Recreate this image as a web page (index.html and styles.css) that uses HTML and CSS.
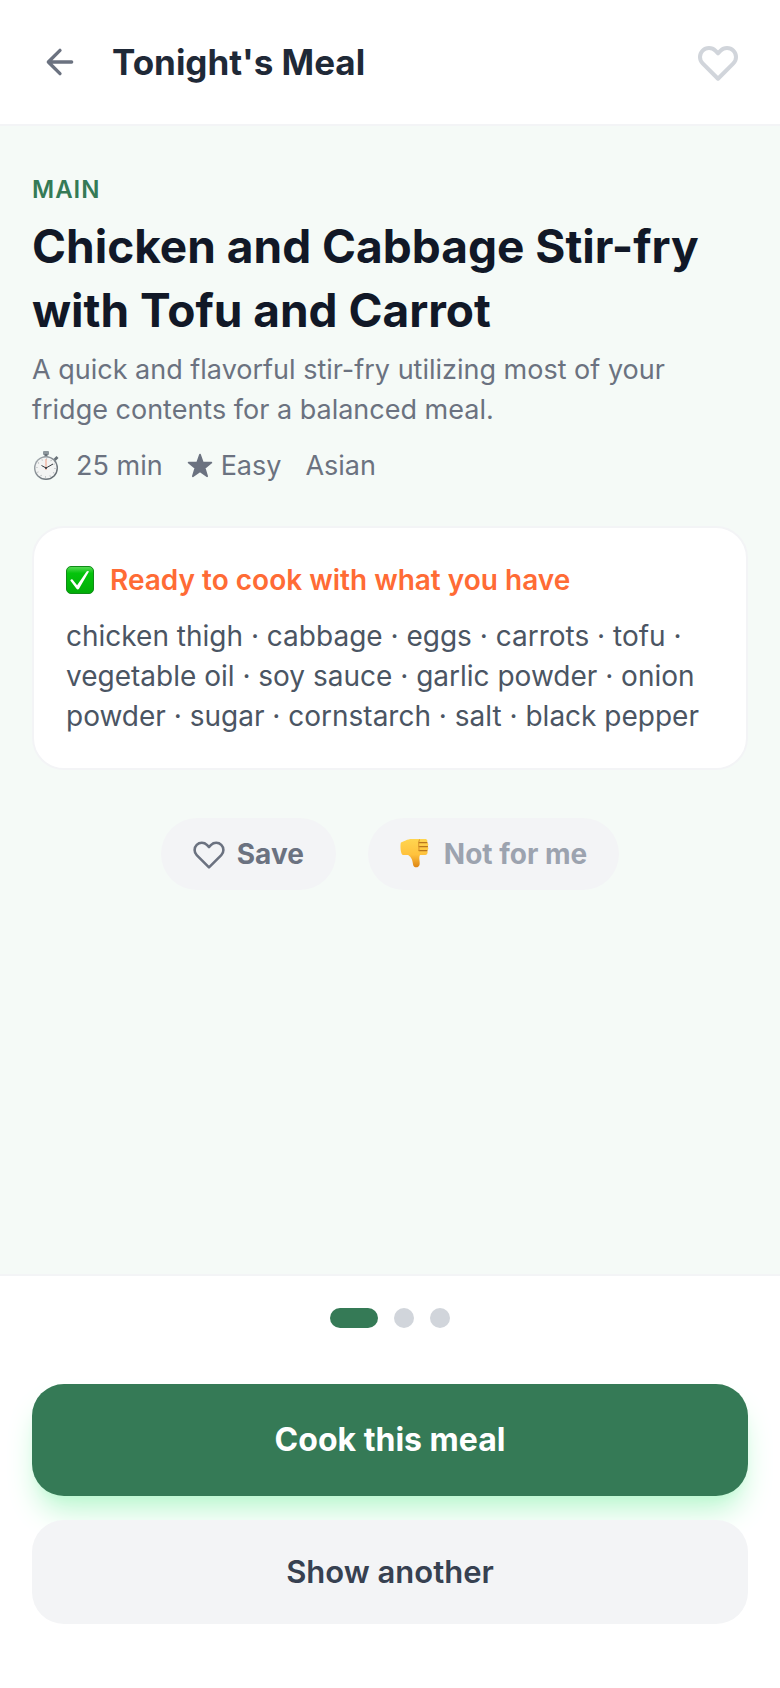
FILE: index.html
```html
<!DOCTYPE html>
<html lang="en">
<head>
    <meta charset="UTF-8">
    <meta name="viewport" content="width=device-width, initial-scale=1.0">
    <title>Tonight's Meal</title>
    <link rel="stylesheet" href="styles.css">
</head>
<body>
    <header class="topbar">
        <button type="button" class="icon-button" aria-label="Back">
            <svg class="icon-back" viewBox="0 0 24 24" fill="none" stroke="currentColor" stroke-width="2" stroke-linecap="round" stroke-linejoin="round">
                <path d="M19 12H5M12 19l-7-7 7-7"/>
            </svg>
        </button>
        <h1>Tonight's Meal</h1>
        <button type="button" class="icon-button favorite" aria-label="Favorite">
            <svg class="icon-heart" viewBox="0 0 24 24" fill="none" stroke="currentColor" stroke-width="2" stroke-linecap="round" stroke-linejoin="round">
                <path d="M4.318 6.318a4.5 4.5 0 000 6.364L12 20.364l7.682-7.682a4.5 4.5 0 00-6.364-6.364L12 7.636l-1.318-1.318a4.5 4.5 0 00-6.364 0z"/>
            </svg>
        </button>
    </header>

    <main class="meal">
        <p class="course">Main</p>
        <h2>Chicken and Cabbage Stir-fry with Tofu and Carrot</h2>
        <p class="description">A quick and flavorful stir-fry utilizing most of your fridge contents for a balanced meal.</p>

        <div class="meta">
            <span class="meta-item time">
                <svg class="icon-timer" viewBox="0 0 28 32">
                    <defs>
                        <linearGradient id="steel" x1="0" y1="0" x2="1" y2="1">
                            <stop offset="0" stop-color="#a9b0b5"/>
                            <stop offset="1" stop-color="#586067"/>
                        </linearGradient>
                    </defs>
                    <rect x="11" y="1" width="6" height="4" rx="1" fill="#8d979c"/>
                    <rect x="12.5" y="4" width="3" height="3" fill="#687178"/>
                    <path d="M21.500 9l3-3 2 2-3 3z" fill="#687178"/>
                    <circle cx="14" cy="18" r="12" fill="url(#steel)"/>
                    <circle cx="14" cy="18" r="10.6" fill="#f3f4f3"/>
                    <circle cx="14" cy="18" r="9" fill="none" stroke="#a4a9ac" stroke-width="1.3" stroke-dasharray=".8 3.912"/>
                    <path d="M14 20V9" stroke="#f1b4a0" stroke-width="1.4"/>
                    <path d="M9.5 15.500L14 18l7-4" fill="none" stroke="#34393d" stroke-width="1"/>
                    <circle cx="14" cy="18" r="1" fill="#34393d"/>
                </svg>
                25 min
            </span>
            <span class="meta-item">
                <svg class="icon-star" viewBox="0 0 24 24" fill="currentColor" stroke="currentColor" stroke-width="1.6" stroke-linejoin="round">
                    <path d="M12 1.500l2.600 7.400h7.900l-6.200 4.900 2.300 7.700-6.600-4.600-6.600 4.600 2.300-7.700-6.200-4.900h7.900z"/>
                </svg>
                Easy
            </span>
            <span class="meta-item">Asian</span>
        </div>

        <section class="ingredients">
            <h3>
                <svg class="icon-check" viewBox="0 0 28 28">
                    <defs>
                        <linearGradient id="green" x1="0" y1="0" x2="0" y2="1">
                            <stop offset="0" stop-color="#5bdc59"/>
                            <stop offset=".25" stop-color="#04c40c"/>
                            <stop offset="1" stop-color="#02ad08"/>
                        </linearGradient>
                    </defs>
                    <rect x=".5" y=".5" width="27" height="27" rx="4.5" fill="url(#green)" stroke="#108c18"/>
                    <path d="M4.300 14.400c.7-1.500 2.300-1.500 3 .1l3.800 4.800L20.600 5.600c.6-.8 2.600-.7 2.100.5L13 22.800c-.5.900-2 .9-2.500 0z" fill="#fff"/>
                </svg>
                Ready to cook with what you have
            </h3>
            <p>chicken thigh · cabbage · eggs · carrots · tofu · vegetable oil · soy sauce · garlic powder · onion powder · sugar · cornstarch · salt · black pepper</p>
        </section>

        <div class="feedback">
            <button type="button" class="pill">
                <svg class="icon-small" viewBox="2 2 20 20" fill="none" stroke="currentColor" stroke-width="1.6" stroke-linecap="round" stroke-linejoin="round">
                    <path d="M4.318 6.318a4.5 4.5 0 000 6.364L12 20.364l7.682-7.682a4.5 4.5 0 00-6.364-6.364L12 7.636l-1.318-1.318a4.5 4.5 0 00-6.364 0z"/>
                </svg>
                Save
            </button>
            <button type="button" class="pill muted">
                <svg class="icon-small" viewBox="0 0 32 32">
                    <defs>
                        <linearGradient id="thumb" x1="0" y1="0" x2="0" y2="1">
                            <stop offset="0" stop-color="#ffd550"/>
                            <stop offset=".55" stop-color="#ffc23d"/>
                            <stop offset="1" stop-color="#dd8414"/>
                        </linearGradient>
                    </defs>
                    <path d="M1 4.500C4 3.500 7 1 12 1h13c2.600 0 3 2.500 1.800 3.500 2 .6 2 3.200.6 4 1.500.9 1.200 3.400-.3 4 1.200 1.300.2 4.500-1.600 4.500-3.500.1-4 0-5.500 0-1.500 3 0 5.500-.3 9-.4 4-5.800 4.700-6.600.7-.6-4.200-1.500-7.500-5-9.700H3C.3 17 0 5.500 1 4.500z" fill="url(#thumb)"/>
                    <path d="M19 4.600h8M19 8.600h8.500M19 12.600h8" fill="none" stroke="#b9761c" stroke-width="1.1" stroke-linecap="round"/>
                    <path d="M19.500 1.500c-1.800 3.500-.2 7-.5 11.500" fill="none" stroke="#d8922a" stroke-width="1"/>
                </svg>
                Not for me
            </button>
        </div>
    </main>

    <footer class="actions">
        <div class="dots">
            <span class="dot active"></span>
            <span class="dot"></span>
            <span class="dot"></span>
        </div>
        <button type="button" class="button primary">Cook this meal</button>
        <button type="button" class="button secondary">Show another</button>
    </footer>
</body>
</html>
```
FILE: styles.css
```css
* {
    box-sizing: border-box;
}
body {
    display: flex;
    flex-direction: column;
    min-height: 100vh;
    margin: 0;
    background: #f5faf7;
    color: #6b7280;
    font-family: Inter, "Liberation Sans", sans-serif;
    font-size: 27px;
    line-height: 40px;
}
h1, h2, h3, p {
    margin: 0;
}
button {
    border: none;
    font-family: inherit;
    cursor: pointer;
}
svg {
    display: block;
    flex-shrink: 0;
}
.topbar {
    display: flex;
    align-items: center;
    gap: 24px;
    padding: 34px 32px;
    background: #fff;
    border-bottom: 2px solid #f3f4f6;
}
.topbar h1 {
    flex: 1;
    color: #1f2937;
    font-size: 35px;
    line-height: 56px;
    font-weight: 700;
}
.icon-button {
    display: flex;
    padding: 8px;
    background: none;
    color: #6b7280;
}
.icon-button.favorite {
    padding: 4px 6px;
    color: #d1d5db;
}
.icon-back {
    width: 40px;
    height: 40px;
}
.icon-heart {
    width: 48px;
    height: 48px;
}
.meal {
    flex: 1;
    padding: 48px 32px;
}
.course {
    margin-bottom: 8px;
    color: #357a56;
    font-size: 24px;
    line-height: 32px;
    font-weight: 600;
    letter-spacing: 1px;
    text-transform: uppercase;
}
.meal h2 {
    margin-bottom: 8px;
    color: #111827;
    font-size: 46px;
    line-height: 64px;
    font-weight: 700;
}
.meta {
    display: flex;
    gap: 24px;
    margin-top: 16px;
}
.meta-item {
    display: flex;
    align-items: center;
    gap: 8px;
}
.meta-item.time {
    gap: 16px;
}
.icon-timer {
    width: 28px;
    height: 32px;
}
.icon-star {
    width: 26px;
    height: 26px;
}
.ingredients {
    margin-top: 40px;
    padding: 32px;
    background: #fff;
    border: 2px solid #f3f4f6;
    border-radius: 32px;
    color: #4b5563;
    font-size: 28px;
}
.ingredients h3 {
    display: flex;
    align-items: center;
    gap: 16px;
    margin-bottom: 16px;
    color: #ff6b35;
    font-size: 28px;
    font-weight: 600;
}
.icon-check {
    width: 28px;
    height: 28px;
}
.feedback {
    display: flex;
    justify-content: center;
    gap: 32px;
    margin-top: 48px;
}
.pill {
    display: flex;
    align-items: center;
    gap: 12px;
    padding: 16px 32px;
    background: #f3f4f6;
    border-radius: 36px;
    color: #6b7280;
    font-size: 28px;
    line-height: 40px;
    font-weight: 700;
}
.pill.muted {
    color: #9ca3af;
}
.icon-small {
    width: 32px;
    height: 32px;
}
.actions {
    display: flex;
    flex-direction: column;
    gap: 24px;
    padding: 32px 32px 64px;
    background: #fff;
    border-top: 2px solid #f3f4f6;
}
.dots {
    display: flex;
    justify-content: center;
    gap: 16px;
    margin-bottom: 32px;
}
.dot {
    width: 20px;
    height: 20px;
    background: #d1d5db;
    border-radius: 10px;
}
.dot.active {
    width: 48px;
    background: #357a56;
}
.button {
    padding: 32px;
    border-radius: 32px;
    font-size: 31px;
    font-weight: 600;
}
.button.primary {
    background: #357a56;
    color: #fff;
    font-size: 32px;
    line-height: 48px;
    font-weight: 700;
    box-shadow: 0 20px 30px -6px #bbf7d0, 0 8px 12px -8px #bbf7d0;
}
.button.secondary {
    position: relative;
    background: #f3f4f6;
    color: #374151;
    line-height: 40px;
}
```
